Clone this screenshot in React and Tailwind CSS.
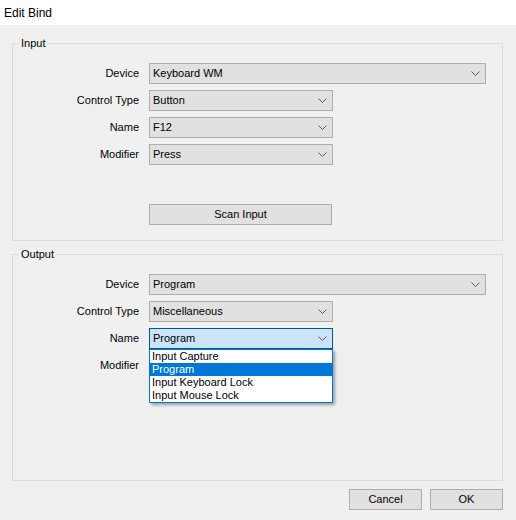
import React from 'react'

const font = { fontFamily: '"Liberation Sans", Arial, sans-serif' }

function Chevron() {
  return (
    <svg width="9" height="5" viewBox="0 0 9 5" className="shrink-0">
      <polyline points="0.5,0.5 4.5,4.5 8.5,0.5" fill="none" stroke="#5a5a5a" strokeWidth="1" />
    </svg>
  )
}

function Combo({ value, wide, focused }) {
  return (
    <div
      className={`h-[21px] ${wide ? 'w-[337px]' : 'w-[184px]'} flex items-center justify-between pl-[3px] pr-[5px] border ${
        focused ? 'bg-[#cce4f7] border-[#005499]' : 'bg-[#e1e1e1] border-[#adadad]'
      }`}
    >
      <span className="text-[11px] text-black leading-none">{value}</span>
      <Chevron />
    </div>
  )
}

function Row({ label, children }) {
  return (
    <div className="flex items-center h-[21px]">
      <div className="w-[126px] text-right text-[11px] text-black">{label}</div>
      <div className="ml-[10px] relative">{children}</div>
    </div>
  )
}

function GroupBox({ title, className, children }) {
  return (
    <div className={`relative border border-[#dcdcdc] ${className}`}>
      <span className="absolute -top-[8px] left-[6px] px-[2px] bg-[#f0f0f0] text-[11px] leading-[14px] text-black">
        {title}
      </span>
      {children}
    </div>
  )
}

export default function App() {
  const items = ['Input Capture', 'Program', 'Input Keyboard Lock', 'Input Mouse Lock']
  return (
    <div className="w-[516px] h-[520px] bg-[#f0f0f0] flex flex-col overflow-hidden" style={font}>
      <div className="h-[25px] bg-white flex items-center px-[4px] text-[12px] text-black">Edit Bind</div>

      <div className="px-[12px] pt-[18px] flex flex-col">
        <GroupBox title="Input" className="w-[491px] h-[198px]">
          <div className="pt-[19px] flex flex-col gap-[6px]">
            <Row label="Device"><Combo value="Keyboard WM" wide /></Row>
            <Row label="Control Type"><Combo value="Button" /></Row>
            <Row label="Name"><Combo value="F12" /></Row>
            <Row label="Modifier"><Combo value="Press" /></Row>
          </div>
          <div className="mt-[39px] ml-[136px] w-[183px] h-[21px] bg-[#e1e1e1] border border-[#adadad] flex items-center justify-center text-[11px] text-black">
            Scan Input
          </div>
        </GroupBox>

        <GroupBox title="Output" className="mt-[13px] w-[491px] h-[227px]">
          <div className="pt-[19px] flex flex-col gap-[6px]">
            <Row label="Device"><Combo value="Program" wide /></Row>
            <Row label="Control Type"><Combo value="Miscellaneous" /></Row>
            <Row label="Name">
              <Combo value="Program" focused />
              <div className="absolute left-0 top-[21px] w-[184px] bg-white border border-[#0078d7] shadow-[2px_2px_3px_rgba(0,0,0,0.35)] z-10 flex flex-col">
                {items.map((it) => (
                  <div
                    key={it}
                    className={`h-[13px] flex items-center pl-[2px] text-[11px] leading-none ${
                      it === 'Program' ? 'bg-[#0078d7] text-white' : 'text-black'
                    }`}
                  >
                    {it}
                  </div>
                ))}
              </div>
            </Row>
            <Row label="Modifier"><div className="w-[184px] h-[21px]" /></Row>
          </div>
        </GroupBox>

        <div className="mt-[8px] w-[491px] flex justify-end gap-[8px]">
          <div className="w-[73px] h-[21px] bg-[#e1e1e1] border border-[#adadad] flex items-center justify-center text-[11px] text-black">
            Cancel
          </div>
          <div className="w-[73px] h-[21px] bg-[#e1e1e1] border border-[#adadad] flex items-center justify-center text-[11px] text-black">
            OK
          </div>
        </div>
      </div>
    </div>
  )
}
